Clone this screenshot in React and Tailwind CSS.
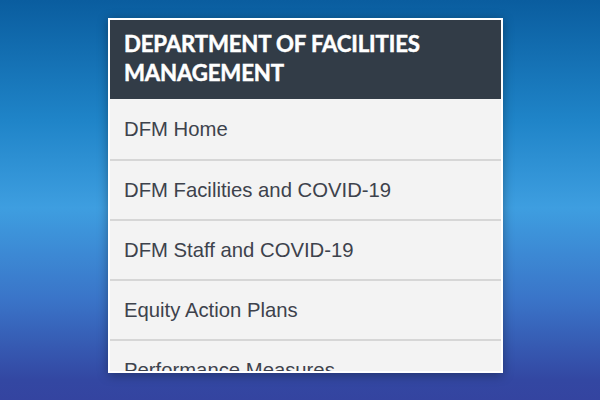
export default function App() {
  const items = [
    "DFM Home",
    "DFM Facilities and COVID-19",
    "DFM Staff and COVID-19",
    "Equity Action Plans",
    "Performance Measures",
  ];
  return (
    <div className="w-[600px] h-[400px] overflow-hidden bg-[linear-gradient(to_bottom,#0a5d9f_0%,#1f84c8_30%,#3e9ee0_52%,#3a74c8_75%,#3347a2_95%,#3444a0_100%)] pt-[18px] pl-[108px]">
      <div className="w-[395px] h-[355px] overflow-hidden border-2 border-white bg-[#f3f3f3] shadow-[0_2px_10px_rgba(0,0,0,0.35)]">
        <div className="h-[79px] bg-[#323c47] px-[14px] pt-[9px] text-white font-['Lato',sans-serif] font-bold text-[22.2px] leading-[29px] tracking-[-0.15px] [-webkit-text-stroke:0.5px_white]">
          DEPARTMENT OF FACILITIES
          <br />
          MANAGEMENT
        </div>
        <div className="flex flex-col">
          {items.map((t, i) => (
            <div
              key={i}
              className={
                "h-[60px] shrink-0 flex items-center px-[14px] font-['Liberation_Sans',Arial,sans-serif] text-[20.3px] text-[#3d424c] " +
                (i > 0 ? "border-t-2 border-[#d6d6d6]" : "")
              }
            >
              {t}
            </div>
          ))}
        </div>
      </div>
    </div>
  );
}
